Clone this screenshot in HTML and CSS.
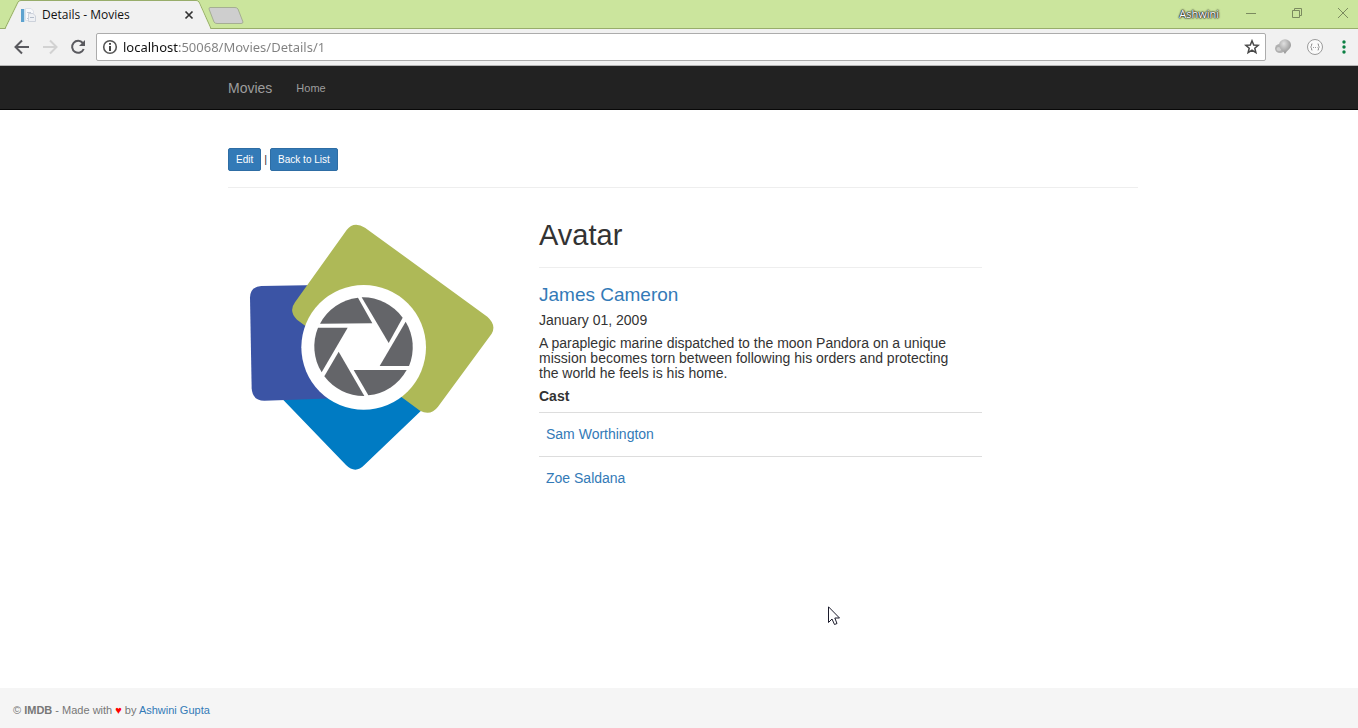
FILE: index.html
```
<!DOCTYPE html>
<html lang="en">
<head>
<meta charset="utf-8">
<title>Details - Movies</title>
<link rel="stylesheet" href="styles.css">
</head>
<body>
<header class="browser">
  <div class="titlebar">
    <div class="tab">
      <svg class="tab-shape" width="256" height="29" viewBox="0 0 256 29" aria-hidden="true">
        <path d="M0 28.5H5L18 2Q19 .5 21 .5H196Q198 .5 199 2L211 28.5H256" fill="none" stroke="#98ad6b"/>
        <path d="M5.500 29L18.500 2.500Q19.500 1 21 1H196Q198 1 199 3L210.500 29Z" fill="#f1f1f1"/>
        <path d="M210 7.500H235Q237 7.500 238 9L243 22Q243 23.500 241 23.500H217Q215 23.500 214 22L209 9Q209 7.500 210 7.500Z" fill="#cecece" stroke="#a5ae93"/>
      </svg>
      <svg class="favicon" width="16" height="16" viewBox="0 0 16 16" aria-hidden="true">
        <path d="M1 2H4V15H1Z" fill="#5da2cf"/><path d="M4 2H5V15H4Z" fill="#c7e0ef"/>
        <path d="M5.500 1.500H11L13.500 4V13.500H5.500Z" fill="#f8f9fb" stroke="#dde1e8"/>
        <path d="M7 5.500H11M7 11.500H9" stroke="#c1c9d5"/>
        <path d="M8.500 6.500H13L15.500 9V14.500H8.500Z" fill="#eef0f4" stroke="#cdd2db"/>
        <path d="M10 10.500H14" stroke="#b4bdca"/>
      </svg>
      <span class="tab-title">Details - Movies</span>
      <button class="plain tab-close" aria-label="Close tab"><svg width="10" height="10" viewBox="0 0 10 10"><path d="M1.500 1.500L8.500 8.500M8.500 1.500L1.500 8.500" stroke="#333" stroke-width="1.700"/></svg></button>
    </div>
    <div class="window-controls">
      <span class="profile">Ashwini</span>
      <button class="plain" aria-label="Minimize"><svg width="12" height="12" viewBox="0 0 12 12"><path d="M1 6.500H11" stroke="#7b8a5f"/></svg></button>
      <button class="plain" aria-label="Restore"><svg width="12" height="12" viewBox="0 0 12 12" fill="none" stroke="#7b8a5f"><path d="M1.500 3.500H8.500V10.500H1.500ZM3.500 3V1.500H10.500V8.500H9"/></svg></button>
      <button class="plain" aria-label="Close"><svg width="12" height="12" viewBox="0 0 12 12"><path d="M1 1L11 11M11 1L1 11" stroke="#7b8a5f"/></svg></button>
    </div>
  </div>
  <div class="toolbar">
    <button class="plain" aria-label="Back"><svg width="16" height="16" viewBox="0 0 16 16" fill="none" stroke="#5a5a5f" stroke-width="2"><path d="M15 8H2M8 1.500L1.500 8L8 14.500"/></svg></button>
    <button class="plain" aria-label="Forward"><svg width="16" height="16" viewBox="0 0 16 16" fill="none" stroke="#d2d2d2" stroke-width="2"><path d="M1 8H14M8 1.500L14.500 8L8 14.500"/></svg></button>
    <button class="plain" aria-label="Reload"><svg width="16" height="16" viewBox="0 0 16 16"><path d="M12.800 4A6 6 0 1 0 13.700 10" fill="none" stroke="#5a5a5f" stroke-width="2"/><path d="M15 1V7H9Z" fill="#5a5a5f"/></svg></button>
    <div class="omnibox">
      <svg width="16" height="16" viewBox="0 0 16 16" aria-hidden="true"><circle cx="8" cy="8" r="6.300" fill="none" stroke="#555" stroke-width="1.600"/><path d="M7 4H9V5.800H7ZM7 7H9V12H7Z" fill="#444"/></svg>
      <input class="url" type="text" aria-label="Address" value="localhost:50068/Movies/Details/1">
      <button class="plain" aria-label="Bookmark"><svg width="16" height="16" viewBox="0 0 16 16"><path d="M8 1.800L9.700 6L14.200 6.300L10.800 9.200L11.900 13.700L8 11.200L4.100 13.700L5.200 9.200L1.800 6.300L6.300 6Z" fill="none" stroke="#484848" stroke-width="1.500"/></svg></button>
    </div>
    <div class="extensions">
      <button class="plain" aria-label="Map extension"><svg width="18" height="18" viewBox="0 0 18 18">
        <defs><radialGradient id="ball" cx=".4" cy=".3" r=".8"><stop offset="0" stop-color="#e0e0e0"/><stop offset="1" stop-color="#858585"/></radialGradient></defs>
        <ellipse cx="6" cy="10.500" rx="5" ry="4.500" fill="#b0b0b0"/><ellipse cx="5" cy="11" rx="2.500" ry="2" fill="#cfcfcf"/>
        <path d="M5 7A5.700 5.500 0 0 1 17 7C17 11 13 12 11 16C9 12 5 11 5 7Z" fill="url(#ball)"/></svg></button>
      <button class="plain" aria-label="Code extension"><svg width="18" height="18" viewBox="0 0 18 18" fill="none" stroke="#9b9b9b"><circle cx="9" cy="9" r="7.500" fill="#fafafa"/><path d="M6.500 6H5.500V8L4.500 9L5.500 10V12H6.500M11.500 6H12.500V8L13.500 9L12.500 10V12H11.500"/><path d="M7 9.500H8M9 9.500H10M11 9.500H11.500"/></svg></button>
      <button class="plain menu" aria-label="Menu"><svg width="4" height="14" viewBox="0 0 4 14" fill="#0b8043"><circle cx="2" cy="2" r="1.700"/><circle cx="2" cy="7" r="1.700"/><circle cx="2" cy="12" r="1.700"/></svg></button>
    </div>
  </div>
</header>
<nav class="navbar">
  <div class="container nav-links">
    <a class="brand" href="#">Movies</a>
    <a class="nav-link" href="#">Home</a>
  </div>
</nav>
<main class="page">
  <div class="container">
    <div class="actions"><a class="btn" href="#">Edit</a><span>|</span><a class="btn" href="#">Back to List</a></div>
    <hr class="rule">
    <div class="movie">
      <svg class="poster" viewBox="0 0 810 795" role="img" aria-label="Camera shutter logo">
        <path d="M140 550L333 750Q361 778 388 750L566 580L450 480Z" fill="#007bc3"/>
        <path d="M79 213L300 209V550L88 557Q52 557 50 520L45 248Q45 215 79 213Z" fill="#3b54a5"/>
        <path d="M335 45Q356 18 390 38L757 305Q785 330 770 356L609 575Q587 604 555 587L186 314Q160 289 180 262Z" fill="#aeb957"/>
        <circle cx="386" cy="397" r="187" fill="#fff"/>
        <g fill="#646569">
          <path d="M255 326A148 148 0 0 1 369 248L412 325Z"/>
          <path d="M380 247A148 148 0 0 1 503 308L461 384Z"/>
          <path d="M512 320A148 148 0 0 1 522 453H434Z"/>
          <path d="M515 465A148 148 0 0 1 400 541L356 465Z"/>
          <path d="M388 543A148 148 0 0 1 268 484L311 410Z"/>
          <path d="M260 472A148 148 0 0 1 249 338H338Z"/>
        </g>
      </svg>
      <article class="details">
        <h1 class="title">Avatar</h1>
        <hr class="rule">
        <h3 class="director"><a href="#">James Cameron</a></h3>
        <p class="text">January 01, 2009</p>
        <p class="text summary">A paraplegic marine dispatched to the moon Pandora on a unique mission becomes torn between following his orders and protecting the world he feels is his home.</p>
        <h5 class="text cast-title">Cast</h5>
        <table class="cast">
          <tbody>
            <tr><td><a href="#">Sam Worthington</a></td></tr>
            <tr><td><a href="#">Zoe Saldana</a></td></tr>
          </tbody>
        </table>
      </article>
    </div>
  </div>
</main>
<footer class="footer">© <b>IMDB</b> - Made with <span class="heart">♥</span> by <a href="#">Ashwini Gupta</a></footer>
<svg class="cursor" width="12" height="20" viewBox="0 0 12 20" aria-hidden="true"><path d="M.5 .8V16.500L4 13L6.500 18.500L9 17.500L6.800 12H11.500Z" fill="#fff" stroke="#1c1c2c"/></svg>
</body>
</html>
```
FILE: styles.css
```
* { box-sizing: border-box; }
body {
  margin: 0;
  min-height: 100vh;
  display: flex;
  flex-direction: column;
  background: #fff;
  color: #333;
  font: 14px/15px "Liberation Sans", Arial, sans-serif;
}
a { color: #337ab7; text-decoration: none; }
svg { display: block; flex: none; }
.plain { border: 0; padding: 0; background: none; }

.browser { font-family: "Open Sans", "Noto Sans", sans-serif; }
.titlebar {
  height: 29px;
  display: flex;
  justify-content: space-between;
  background: #cbe59d;
  border-bottom: 1px solid #98ad6b;
}
.tab {
  position: relative;
  width: 200px;
  height: 29px;
  display: flex;
  align-items: center;
  gap: 6px;
  padding: 0 6px 0 20px;
}
.tab-shape { position: absolute; left: 0; top: 0; }
.favicon, .tab-title, .tab-close { position: relative; }
.tab-title { flex: 1; font-size: 12px; color: #111; white-space: nowrap; }
.window-controls { display: flex; align-items: center; gap: 34px; padding: 0 9px 2px 0; }
.profile {
  font-size: 11px;
  color: #fff;
  text-shadow: 0 0 1px #222, 0 0 1px #222, 0 0 2px #222, 0 0 2px #222;
  margin-right: -8px;
}
.toolbar {
  height: 37px;
  display: flex;
  align-items: center;
  gap: 12px;
  padding: 0 12px 0 14px;
  background: #f1f1f1;
  border-bottom: 1px solid #b5b5b5;
}
.omnibox {
  flex: 1;
  height: 28px;
  margin-left: -2px;
  display: flex;
  align-items: center;
  gap: 5px;
  padding: 0 5px;
  background: #fff;
  border: 1px solid #acacac;
  border-radius: 2px;
}
.url {
  flex: 1;
  min-width: 0;
  border: 0;
  padding: 0;
  outline: 0;
  font: 13px/20px "Noto Sans", sans-serif;
  color: transparent;
  background: linear-gradient(90deg, #111 56px, #808080 56px);
  -webkit-background-clip: text;
  background-clip: text;
}
.extensions { display: flex; align-items: center; gap: 14px; margin-left: -4px; }
.menu { margin-left: 4px; }

.container { max-width: 910px; margin: 0 auto; }
.navbar, .page { padding-left: 8px; }
.navbar { background: #222; border-bottom: 1px solid #080808; }
.nav-links { display: flex; align-items: center; gap: 24px; height: 43px; padding-top: 1px; }
.brand, .nav-link { color: #9d9d9d; }
.brand { font-size: 14px; }
.nav-link { font-size: 11px; }

.page { flex: 1; padding-top: 38px; }
.actions { display: flex; align-items: center; gap: 3px; font-size: 11px; }
.btn {
  padding: 3px 7px;
  font-size: 10px;
  color: #fff;
  background: #337ab7;
  border: 1px solid #2e6da4;
  border-radius: 2px;
}
.rule { margin: 16px 0; border: 0; border-top: 1px solid #eee; }
.movie { display: grid; grid-template-columns: 270px minmax(0, 443px); gap: 34px; margin-top: 27px; padding-left: 7px; }
.poster { width: 100%; }
.details { padding-top: 4px; }
.title { margin: 0 0 16px; font-size: 29px; line-height: 32px; font-weight: 400; }
.director { margin: 0 0 8px; font-size: 19px; line-height: 21px; font-weight: 400; }
.text { margin: 0 0 8px; font-size: 14px; line-height: 15px; }
.summary { padding-right: 16px; }
.cast { width: 100%; border-collapse: collapse; }
.cast td { height: 44px; padding: 0 7px; border-top: 1px solid #ddd; }

.footer { padding: 15px 13px 10px; background: #f5f5f5; color: #777; font-size: 11px; }
.heart { color: #f00; }
.cursor { position: absolute; left: 828px; top: 606px; }
```
